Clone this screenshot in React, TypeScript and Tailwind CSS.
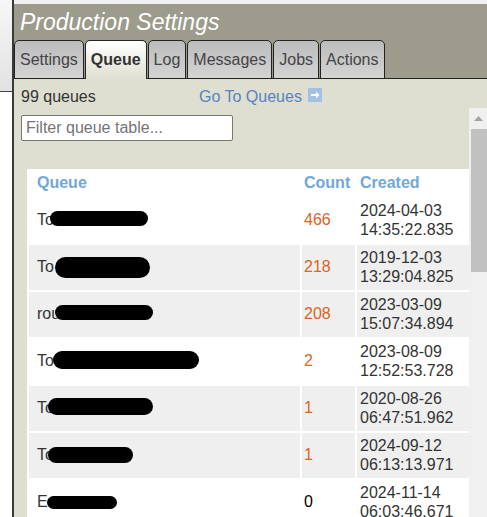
import React from 'react';

type Row = {
  pre: string;
  blob: string;
  count: string;
  date: string;
  time: string;
  gray: boolean;
  zero?: boolean;
};

const rows: Row[] = [
  { pre: 'To', blob: 'w-[98px] h-[15px] -ml-[4px] -translate-y-[2px]', count: '466', date: '2024-04-03', time: '14:35:22.835', gray: false },
  { pre: 'To', blob: 'w-[95px] h-[21px] ml-[1px]', count: '218', date: '2019-12-03', time: '13:29:04.825', gray: true },
  { pre: 'rou', blob: 'w-[98px] h-[15px] -ml-[5px] -translate-y-[2px]', count: '208', date: '2023-03-09', time: '15:07:34.894', gray: true },
  { pre: 'To', blob: 'w-[146px] h-[18px] -ml-[1px] -translate-y-[2px]', count: '2', date: '2023-08-09', time: '12:52:53.728', gray: false },
  { pre: 'To', blob: 'w-[105px] h-[17px] -ml-[6px] -translate-y-[2px]', count: '1', date: '2020-08-26', time: '06:47:51.962', gray: true },
  { pre: 'To', blob: 'w-[85px] h-[16px] -ml-[6px] -translate-y-[1px]', count: '1', date: '2024-09-12', time: '06:13:13.971', gray: true },
  { pre: 'E', blob: 'w-[70px] h-[13px] -ml-[1px]', count: '0', date: '2024-11-14', time: '06:03:46.671', gray: false, zero: true },
];

const tabs = ['Settings', 'Queue', 'Log', 'Messages', 'Jobs', 'Actions'];

const GoIcon = () => (
  <svg width="14" height="14" viewBox="0 0 14 14" className="ml-[6px] shrink-0">
    <rect x="0" y="0" width="14" height="14" fill="#a3c0e6" />
    <path d="M3 6h5V3.5L11.5 7 8 10.5V8H3z" fill="#ffffff" />
  </svg>
);

export default function App() {
  return (
    <div className="h-[517px] w-[487px] overflow-hidden bg-white flex font-['Liberation_Sans',Arial,sans-serif]">
      {/* window behind, left edge */}
      <div className="w-[12px] shrink-0">
        <div className="h-[92px] bg-gradient-to-b from-[#f7f7f7] to-[#e2e2e2] border-b border-[#444]" />
      </div>

      <div className="flex-1 min-w-0 flex flex-col border-l-2 border-[#3a3a3a]">
        <div className="h-[4px] bg-[#f0f0f0] shrink-0" />

        {/* title bar + tabs */}
        <div className="bg-[#9c9b8c] shrink-0">
          <h1 className="h-[36px] pl-[6px] pt-[5px] text-[23px] leading-[27px] italic text-white">
            Production Settings
          </h1>
          <div className="h-[39px] flex items-end gap-px border-b border-[#222]">
            {tabs.map((t) =>
              t === 'Queue' ? (
                <div
                  key={t}
                  className="h-[39px] -mb-px px-[5px] flex items-center rounded-t-[5px] border border-b-0 border-[#222] bg-gradient-to-b from-white to-[#dfdfd1] text-[16px] font-bold text-[#333]"
                >
                  {t}
                </div>
              ) : (
                <div
                  key={t}
                  className="h-[39px] -mb-px px-[5px] flex items-center rounded-t-[5px] border border-[#222] bg-gradient-to-b from-[#bcbcbc] to-[#d4d4d4] text-[16px] text-[#444]"
                >
                  {t}
                </div>
              )
            )}
          </div>
        </div>

        {/* content */}
        <div className="flex-1 bg-[#dfdfd1] flex flex-col min-h-0">
          <div className="h-[29px] shrink-0 pt-[9px] pl-[7px] flex items-start text-[16px] leading-[18px]">
            <span className="w-[178px] text-[#333]">99 queues</span>
            <span className="text-[#5583c2]">Go To Queues</span>
            <GoIcon />
          </div>

          <div className="flex flex-1 min-h-0">
            <div className="flex-1 min-w-0 overflow-hidden">
              <input
                placeholder="Filter queue table..."
                className="mt-[7px] ml-[7px] w-[212px] h-[26px] bg-white border border-[#767676] rounded-[2px] px-[4px] text-[16px] text-[#333] placeholder:text-[#757575] outline-none"
              />

              <table className="mt-[28px] ml-[13px] w-[462px] table-fixed border-separate border-spacing-[2px] bg-white text-[16px] leading-[18.5px]">
                <colgroup>
                  <col className="w-[271px]" />
                  <col className="w-[53px]" />
                  <col className="w-[130px]" />
                </colgroup>
                <thead>
                  <tr className="h-[25px] text-[#6fa8dc] font-bold text-left">
                    <th className="p-0 pl-[8px] align-middle">Queue</th>
                    <th className="p-0 pl-[2px] align-middle">Count</th>
                    <th className="p-0 pl-[3px] align-middle">Created</th>
                  </tr>
                </thead>
                <tbody>
                  {rows.map((r, i) => {
                    const bg = r.gray ? 'bg-[#efefef]' : 'bg-white';
                    return (
                      <tr key={i} className="h-[45px]">
                        <td className={`${bg} p-0 pl-[8px] align-middle text-[#333]`}>
                          <div className="flex items-center">
                            <span>{r.pre}</span>
                            <span className={`inline-block bg-black rounded-full ${r.blob}`} />
                          </div>
                        </td>
                        <td className={`${bg} p-0 pl-[2px] align-middle ${r.zero ? 'text-black' : 'text-[#dd6423]'}`}>
                          {r.count}
                        </td>
                        <td className={`${bg} p-0 pl-[3px] align-middle text-[#333]`}>
                          <div>{r.date}</div>
                          <div>{r.time}</div>
                        </td>
                      </tr>
                    );
                  })}
                </tbody>
              </table>
            </div>

            {/* scrollbar */}
            <div className="w-[18px] shrink-0 bg-[#f0f0f0] flex flex-col">
              <div className="h-[21px] flex items-center justify-center">
                <svg width="9" height="5" viewBox="0 0 9 5">
                  <path d="M0 5L4.5 0L9 5z" fill="#a3a3a3" />
                </svg>
              </div>
              <div className="ml-[2px] h-[143px] bg-[#c1c1c1]" />
            </div>
          </div>
        </div>
      </div>
    </div>
  );
}
